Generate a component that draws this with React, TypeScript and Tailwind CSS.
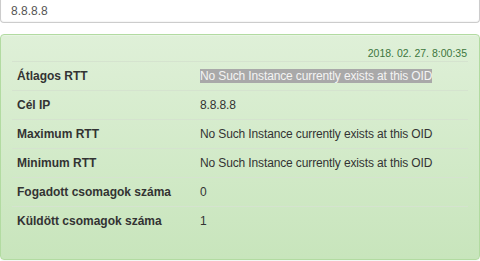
const rows: { label: string; value: string; selected?: boolean }[] = [
  { label: 'Átlagos RTT', value: 'No Such Instance currently exists at this OID', selected: true },
  { label: 'Cél IP', value: '8.8.8.8' },
  { label: 'Maximum RTT', value: 'No Such Instance currently exists at this OID' },
  { label: 'Minimum RTT', value: 'No Such Instance currently exists at this OID' },
  { label: 'Fogadott csomagok száma', value: '0' },
  { label: 'Küldött csomagok száma', value: '1' },
];

export default function App() {
  return (
    <div className="w-[480px] h-[261px] bg-white font-['Liberation_Sans',Arial,sans-serif] text-[12px] text-[#333] overflow-hidden">
      <div className="h-[23px] border-x border-b border-[#ccc] rounded-b-[4px] flex items-center px-[10px] text-[#555] shadow-[inset_0_-1px_1px_rgba(0,0,0,0.04)]">
        8.8.8.8
      </div>

      <div className="mt-[11px] h-[226px] border border-[#b2dba1] rounded-[4px] bg-gradient-to-b from-[#dff0d8] to-[#c8e5bc] px-[11px] pt-[11px] shadow-[inset_0_1px_0_rgba(255,255,255,0.25),0_1px_2px_rgba(0,0,0,0.05)]">
        <div className="h-[15px] leading-[15px] text-right text-[10.5px] text-[#3c763d] pr-[1px]">
          2018. 02. 27. 8:00:35
        </div>
        <table className="w-full border-collapse">
          <tbody>
            {rows.map((r) => (
              <tr key={r.label} className="border-t border-[#d5e3cf]">
                <th className="w-[183px] text-left font-bold px-[5px] py-[5px] leading-[18px]">
                  {r.label}
                </th>
                <td className="px-[5px] py-[5px] leading-[18px] tracking-[-0.13px]">
                  {r.selected ? (
                    <span className="bg-[#a9a9a9] text-[#f4f4f4]">{r.value}</span>
                  ) : (
                    r.value
                  )}
                </td>
              </tr>
            ))}
          </tbody>
        </table>
      </div>
    </div>
  );
}
